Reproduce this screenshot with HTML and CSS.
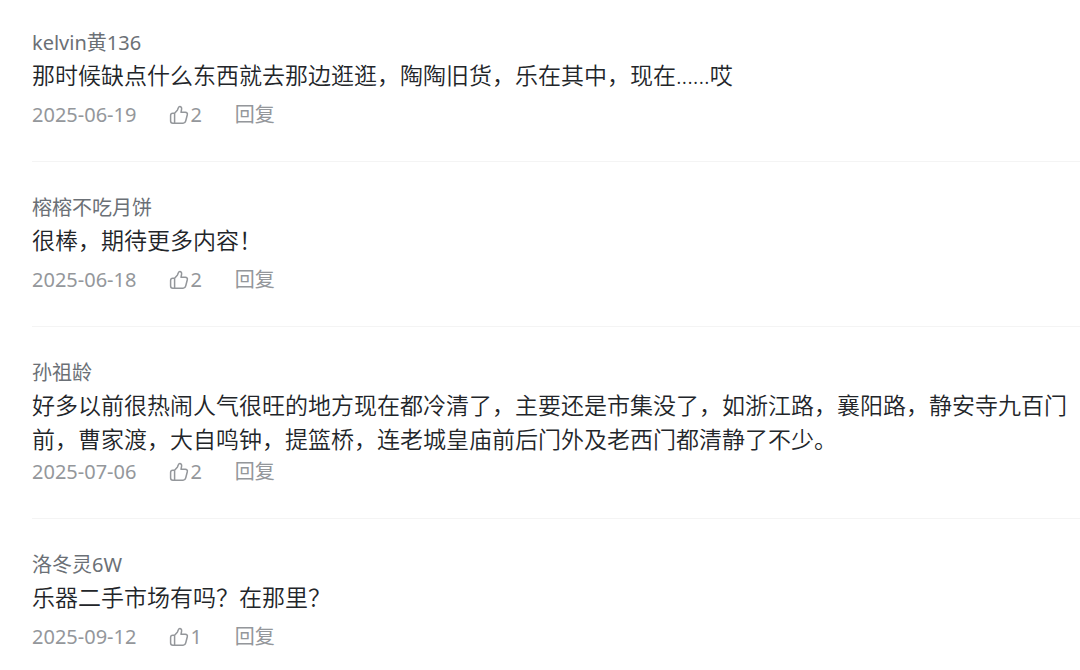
FILE: index.html
```html
<!DOCTYPE html>
<html lang="zh-CN">
<head>
<meta charset="utf-8">
<title>评论</title>
<meta name="viewport" content="width=device-width, initial-scale=1">
<link rel="stylesheet" href="styles.css">
</head>
<body>
<svg class="sprite" aria-hidden="true">
  <symbol id="thumb" viewBox="0 0 20 20">
    <path d="M5.6 8.2 8.3 5.2C9.1 4.2 9 1.4 10.7 1.4c1.6 0 2.1 1.4 1.9 2.7L12 7.3h4.3c1.6 0 2.4 1.1 2 2.5l-1.6 6.2c-.4 1.5-1.2 2.2-2.6 2.2H3.8c-1.4 0-2.2-.8-2.2-2.2v-5.6c0-1.4.8-2.2 2.2-2.2zM5.6 8.2v10"/>
  </symbol>
</svg>
<main class="comments">
  <article class="comment">
    <h2 class="author">kelvin黄136</h2>
    <p class="text">那时候缺点什么东西就去那边逛逛，陶陶旧货，乐在其中，现在......哎</p>
    <footer class="meta">
      <time datetime="2025-06-19">2025-06-19</time>
      <button class="like" type="button" aria-label="赞 2"><svg class="icon" aria-hidden="true"><use href="#thumb"/></svg>2</button>
      <button class="reply" type="button">回复</button>
    </footer>
  </article>
  <article class="comment">
    <h2 class="author">榕榕不吃月饼</h2>
    <p class="text">很棒，期待更多内容！</p>
    <footer class="meta">
      <time datetime="2025-06-18">2025-06-18</time>
      <button class="like" type="button" aria-label="赞 2"><svg class="icon" aria-hidden="true"><use href="#thumb"/></svg>2</button>
      <button class="reply" type="button">回复</button>
    </footer>
  </article>
  <article class="comment comment-long">
    <h2 class="author">孙祖龄</h2>
    <p class="text">好多以前很热闹人气很旺的地方现在都冷清了，主要还是市集没了，如浙江路，襄阳路，静安寺九百门前，曹家渡，大自鸣钟，提篮桥，连老城皇庙前后门外及老西门都清静了不少。</p>
    <footer class="meta">
      <time datetime="2025-07-06">2025-07-06</time>
      <button class="like" type="button" aria-label="赞 2"><svg class="icon" aria-hidden="true"><use href="#thumb"/></svg>2</button>
      <button class="reply" type="button">回复</button>
    </footer>
  </article>
  <article class="comment">
    <h2 class="author">洛冬灵6W</h2>
    <p class="text">乐器二手市场有吗？在那里？</p>
    <footer class="meta">
      <time datetime="2025-09-12">2025-09-12</time>
      <button class="like" type="button" aria-label="赞 1"><svg class="icon" aria-hidden="true"><use href="#thumb"/></svg>1</button>
      <button class="reply" type="button">回复</button>
    </footer>
  </article>
</main>
</body>
</html>
```
FILE: styles.css
```css
* {
  box-sizing: border-box;
}

body {
  margin: 0;
  background: #fff;
  color: #222529;
  font-family: "Noto Sans", "Noto Sans CJK SC", sans-serif;
  font-weight: 350;
}

.sprite {
  display: none;
}

.comments {
  padding-left: 32px;
}

.comment {
  padding: 32px 8px 32px 0;
  border-bottom: 1px solid #f4f4f4;
}

.comment:first-child {
  padding-top: 29px;
}

.comment:last-child {
  border-bottom: 0;
  padding-bottom: 16px;
}

.author {
  margin: 0;
  color: #6b7076;
  font-size: 20px;
  font-weight: 400;
  line-height: 28px;
}

.text {
  margin: 1px 0 9px;
  font-size: 23px;
  line-height: 34px;
}

.comment-long .text {
  margin-bottom: 2px;
}

.meta {
  display: flex;
  align-items: center;
  gap: 33px;
  color: #94979b;
  font-size: 20px;
  font-weight: 400;
  line-height: 28px;
}

.like,
.reply {
  padding: 0;
  border: 0;
  background: none;
  color: inherit;
  font: inherit;
  cursor: pointer;
}

.like {
  display: flex;
  align-items: center;
  gap: 1px;
}

.icon {
  width: 20px;
  height: 20px;
  fill: none;
  stroke: currentColor;
  stroke-width: 1.5;
  stroke-linejoin: round;
}
```
